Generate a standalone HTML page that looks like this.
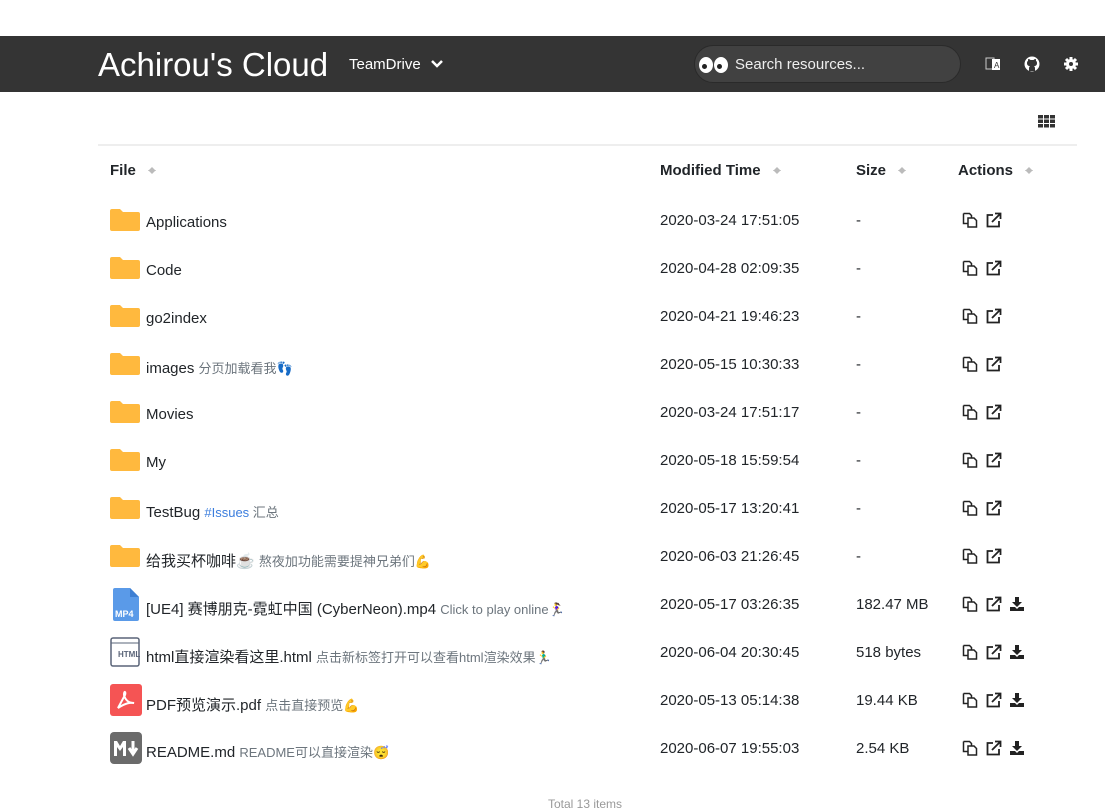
<!DOCTYPE html>
<html><head><meta charset="utf-8"><style>
*{margin:0;padding:0;box-sizing:border-box}
body{width:1105px;height:803px;overflow:hidden;background:#fff;font-family:"Liberation Sans","Noto Sans CJK SC",sans-serif;color:#212529;position:relative}
.nav{position:absolute;top:36px;left:0;width:1105px;height:56px;background:#343434}
.brand{position:absolute;left:98px;top:10px;font-size:33px;color:#fff}
.td{position:absolute;left:349px;top:20px;font-size:15px;color:#fff}
.search{position:absolute;left:694px;top:9px;width:267px;height:38px;border-radius:19px;background:#414141;border:1px solid #2a2a2a;color:#eee;font-size:15px;padding:10px 0 0 40px}
.eye{position:absolute;top:11px;width:14px;height:16px;border-radius:50%;background:#fff}
.eye i{position:absolute;left:3px;top:7px;width:5px;height:5px;border-radius:50%;background:#222}
.hdr{position:absolute;top:162px;font-weight:bold;font-size:15px}
.s{display:inline-block;width:0;margin-left:12px;vertical-align:middle;position:relative;top:-2px}
.s:before{content:"";position:absolute;border:4px solid transparent;border-bottom:4px solid #bbb;top:-6px}
.s:after{content:"";position:absolute;border:4px solid transparent;border-top:4px solid #bbb;top:1px}
.row{position:absolute;left:0;width:1105px;height:48px;font-size:15px}
.ic{position:absolute;left:110px}
.nm{position:absolute;left:146px;top:15px;white-space:nowrap}
.nm small{font-size:13px;color:#6c757d}
.t{position:absolute;left:660px;top:13px}
.z{position:absolute;left:856px;top:13px}
.a{position:absolute;left:962px;top:13px}
.folder{width:30px;height:22px;top:10px}
</style></head><body>
<svg width="0" height="0" style="position:absolute"><defs>
<g id="cp"><path d="M1.5 1.5h6l2 2v3M1.5 1.5v10h4" fill="none" stroke="#222" stroke-width="1.5"/><path d="M6 6h6l2.5 2.5v6.5H6z" fill="none" stroke="#222" stroke-width="1.5"/></g>
<g id="ex"><path d="M7 3H1.5v11.5H13V9" fill="none" stroke="#222" stroke-width="1.8"/><path d="M6 10l8-8M9 1.5h5.5V7" fill="none" stroke="#222" stroke-width="1.8"/></g>
<g id="dl"><path d="M5 1h4v5h3l-5 5-5-5h3z" fill="#222"/><path d="M0 11h5l2 2 2-2h5v4H0z" fill="#222"/></g>
</defs></svg>
<div class="nav">
<div class="brand">Achirou's Cloud</div>
<div class="td">TeamDrive <svg width="12" height="10" style="margin-left:6px" viewBox="0 0 12 10"><path d="M1 2l5 5 5-5" stroke="#fff" stroke-width="2.5" fill="none"/></svg></div>
<div class="search"><span class="eye" style="left:4px"><i></i></span><span class="eye" style="left:19px"><i></i></span>Search resources...</div>
<svg style="position:absolute;left:985px;top:20px" width="16" height="16" viewBox="0 0 16 16"><rect x="1" y="2" width="8" height="11" fill="none" stroke="#ccc"/><rect x="7" y="3" width="8" height="11" fill="#fff"/><text x="9" y="12" font-size="8" fill="#333">A</text></svg>
<svg style="position:absolute;left:1024px;top:20px" width="16" height="16" viewBox="0 0 16 16"><circle cx="8" cy="8" r="7.5" fill="#fff"/><path d="M5 15v-3c0-1 1-2 1-2-2 0-3-1-3-3 0-1 .5-2 1-2 0-1 0-2 .5-2 1 0 2 1 2 1h3s1-1 2-1c.5 0 .5 1 .5 2 .5 0 1 1 1 2 0 2-1 3-3 3 0 0 1 1 1 2v3z" fill="#343434"/></svg>
<svg style="position:absolute;left:1063px;top:20px" width="16" height="16" viewBox="0 0 16 16"><g stroke="#fff" stroke-width="3"><path d="M8 1v14M1 8h14M3 3l10 10M13 3L3 13"/></g><circle cx="8" cy="8" r="5" fill="#fff"/><circle cx="8" cy="8" r="2" fill="#343434"/></svg>
</div>
<svg style="position:absolute;left:1038px;top:115px" width="17" height="13" viewBox="0 0 17 13"><g fill="#333"><rect x="0" y="0" width="5" height="3.5"/><rect x="6" y="0" width="5" height="3.5"/><rect x="12" y="0" width="5" height="3.5"/><rect x="0" y="4.5" width="5" height="3.5"/><rect x="6" y="4.5" width="5" height="3.5"/><rect x="12" y="4.5" width="5" height="3.5"/><rect x="0" y="9" width="5" height="3.5"/><rect x="6" y="9" width="5" height="3.5"/><rect x="12" y="9" width="5" height="3.5"/></g></svg>
<div style="position:absolute;left:98px;top:144px;width:979px;height:2px;background:#eee"></div>
<div class="hdr" style="left:110px">File<span class="s"></span></div>
<div class="hdr" style="left:660px">Modified Time<span class="s"></span></div>
<div class="hdr" style="left:856px">Size<span class="s"></span></div>
<div class="hdr" style="left:958px">Actions<span class="s"></span></div>

<div class="row" style="top:199px"><svg class="ic folder" viewBox="0 0 30 22"><path d="M0 2q0-2 2-2h8l3 3h15q2 0 2 2v15q0 2-2 2H2q-2 0-2-2z" fill="#ffb93e"/></svg><div class="nm">Applications</div><div class="t">2020-03-24 17:51:05</div><div class="z">-</div><div class="a"><svg width="60" height="16"><use href="#cp"/><use href="#ex" x="24"/></svg></div></div>
<div class="row" style="top:247px"><svg class="ic folder" viewBox="0 0 30 22"><path d="M0 2q0-2 2-2h8l3 3h15q2 0 2 2v15q0 2-2 2H2q-2 0-2-2z" fill="#ffb93e"/></svg><div class="nm">Code</div><div class="t">2020-04-28 02:09:35</div><div class="z">-</div><div class="a"><svg width="60" height="16"><use href="#cp"/><use href="#ex" x="24"/></svg></div></div>
<div class="row" style="top:295px"><svg class="ic folder" viewBox="0 0 30 22"><path d="M0 2q0-2 2-2h8l3 3h15q2 0 2 2v15q0 2-2 2H2q-2 0-2-2z" fill="#ffb93e"/></svg><div class="nm">go2index</div><div class="t">2020-04-21 19:46:23</div><div class="z">-</div><div class="a"><svg width="60" height="16"><use href="#cp"/><use href="#ex" x="24"/></svg></div></div>
<div class="row" style="top:343px"><svg class="ic folder" viewBox="0 0 30 22"><path d="M0 2q0-2 2-2h8l3 3h15q2 0 2 2v15q0 2-2 2H2q-2 0-2-2z" fill="#ffb93e"/></svg><div class="nm">images <small>分页加载看我👣</small></div><div class="t">2020-05-15 10:30:33</div><div class="z">-</div><div class="a"><svg width="60" height="16"><use href="#cp"/><use href="#ex" x="24"/></svg></div></div>
<div class="row" style="top:391px"><svg class="ic folder" viewBox="0 0 30 22"><path d="M0 2q0-2 2-2h8l3 3h15q2 0 2 2v15q0 2-2 2H2q-2 0-2-2z" fill="#ffb93e"/></svg><div class="nm">Movies</div><div class="t">2020-03-24 17:51:17</div><div class="z">-</div><div class="a"><svg width="60" height="16"><use href="#cp"/><use href="#ex" x="24"/></svg></div></div>
<div class="row" style="top:439px"><svg class="ic folder" viewBox="0 0 30 22"><path d="M0 2q0-2 2-2h8l3 3h15q2 0 2 2v15q0 2-2 2H2q-2 0-2-2z" fill="#ffb93e"/></svg><div class="nm">My</div><div class="t">2020-05-18 15:59:54</div><div class="z">-</div><div class="a"><svg width="60" height="16"><use href="#cp"/><use href="#ex" x="24"/></svg></div></div>
<div class="row" style="top:487px"><svg class="ic folder" viewBox="0 0 30 22"><path d="M0 2q0-2 2-2h8l3 3h15q2 0 2 2v15q0 2-2 2H2q-2 0-2-2z" fill="#ffb93e"/></svg><div class="nm">TestBug <small><span style="color:#3b7ddd">#Issues</span> 汇总</small></div><div class="t">2020-05-17 13:20:41</div><div class="z">-</div><div class="a"><svg width="60" height="16"><use href="#cp"/><use href="#ex" x="24"/></svg></div></div>
<div class="row" style="top:535px"><svg class="ic folder" viewBox="0 0 30 22"><path d="M0 2q0-2 2-2h8l3 3h15q2 0 2 2v15q0 2-2 2H2q-2 0-2-2z" fill="#ffb93e"/></svg><div class="nm">给我买杯咖啡☕ <small>熬夜加功能需要提神兄弟们💪</small></div><div class="t">2020-06-03 21:26:45</div><div class="z">-</div><div class="a"><svg width="60" height="16"><use href="#cp"/><use href="#ex" x="24"/></svg></div></div>
<div class="row" style="top:583px"><svg class="ic" style="left:113px;top:5px" width="26" height="33" viewBox="0 0 26 33"><path d="M0 2q0-2 2-2h15l9 9v22q0 2-2 2H2q-2 0-2-2z" fill="#5a9ae8"/><path d="M17 0v9h9" fill="#3d7fd3"/><text x="2" y="29" font-size="9" font-weight="bold" fill="#fff" font-family="Liberation Sans">MP4</text></svg><div class="nm">[UE4] 赛博朋克-霓虹中国 (CyberNeon).mp4 <small>Click to play online🏃‍♀</small></div><div class="t">2020-05-17 03:26:35</div><div class="z">182.47 MB</div><div class="a"><svg width="70" height="16"><use href="#cp"/><use href="#ex" x="24"/><use href="#dl" x="48"/></svg></div></div>
<div class="row" style="top:631px"><svg class="ic" style="top:6px" width="30" height="30" viewBox="0 0 30 30"><rect x="1" y="1" width="28" height="28" rx="2" fill="#fff" stroke="#5a6478" stroke-width="1.5"/><path d="M1 6h28" stroke="#5a6478"/><text x="8" y="20" font-size="8" font-weight="bold" fill="#5a6478" font-family="Liberation Sans">HTML</text></svg><div class="nm">html直接渲染看这里.html <small>点击新标签打开可以查看html渲染效果🏃‍♂</small></div><div class="t">2020-06-04 20:30:45</div><div class="z">518 bytes</div><div class="a"><svg width="70" height="16"><use href="#cp"/><use href="#ex" x="24"/><use href="#dl" x="48"/></svg></div></div>
<div class="row" style="top:679px"><svg class="ic" style="top:5px" width="32" height="32" viewBox="0 0 32 32"><rect width="32" height="32" rx="3" fill="#f55454"/><path d="M8 24l7-13c1-3-1-5-1 0 1 4 4 8 10 8-4-1-10 1-16 5z" fill="none" stroke="#fff" stroke-width="2"/></svg><div class="nm">PDF预览演示.pdf <small>点击直接预览💪</small></div><div class="t">2020-05-13 05:14:38</div><div class="z">19.44 KB</div><div class="a"><svg width="70" height="16"><use href="#cp"/><use href="#ex" x="24"/><use href="#dl" x="48"/></svg></div></div>
<div class="row" style="top:727px"><svg class="ic" style="top:5px" width="32" height="32" viewBox="0 0 32 32"><rect width="32" height="32" rx="4" fill="#6b6b6b"/><path d="M4 24V9h3l3 5 3-5h3v15h-3v-9l-3 4-3-4v9z" fill="#fff"/><path d="M23 9v10M19 16l4 6 4-6" stroke="#fff" stroke-width="3" fill="none"/></svg><div class="nm">README.md <small>README可以直接渲染😴</small></div><div class="t">2020-06-07 19:55:03</div><div class="z">2.54 KB</div><div class="a"><svg width="70" height="16"><use href="#cp"/><use href="#ex" x="24"/><use href="#dl" x="48"/></svg></div></div>
<div style="position:absolute;top:797px;left:548px;font-size:12px;color:#999">Total 13 items</div>
</body></html>
